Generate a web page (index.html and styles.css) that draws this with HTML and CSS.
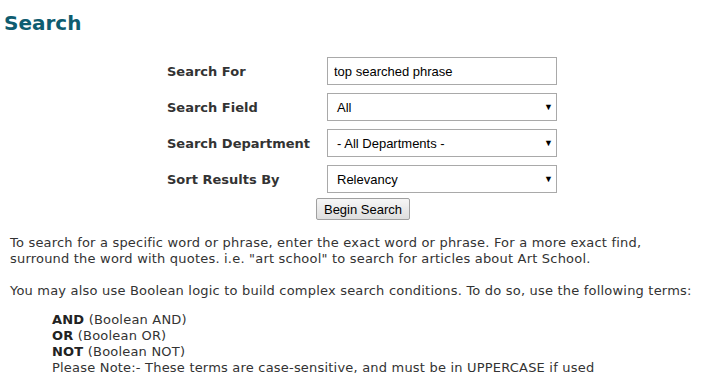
FILE: index.html
```html
<!DOCTYPE html>
<html>
    <head>
        <title>Search</title>
        <link rel="stylesheet" href="styles.css">
    </head>
    <body>
        <h1 class="page-title">Search</h1>
        <form class="search-form" onsubmit="return false;">
            <div class="form-row">
                <label for="q">Search For</label>
                <input type="text" id="q" class="field" value="top searched phrase">
            </div>
            <div class="form-row">
                <label for="field">Search Field</label>
                <div class="select-box">
                    <span>All</span>
                    <span class="arrow">&#9660;</span>
                </div>
            </div>
            <div class="form-row">
                <label for="dept">Search Department</label>
                <div class="select-box">
                    <span>- All Departments -</span>
                    <span class="arrow">&#9660;</span>
                </div>
            </div>
            <div class="form-row">
                <label for="sort">Sort Results By</label>
                <div class="select-box">
                    <span>Relevancy</span>
                    <span class="arrow">&#9660;</span>
                </div>
            </div>
            <div class="button-row">
                <button class="begin-button">Begin Search</button>
            </div>
        </form>

        <div class="help">
            <p>To search for a specific word or phrase, enter the exact word or phrase. For a more exact find, surround the word with quotes. i.e. "art school" to search for articles about Art School.</p>
            <p class="lead">You may also use Boolean logic to build complex search conditions. To do so, use the following terms:</p>
            <div class="terms">
                <b>AND</b> (Boolean AND)<br>
                <b>OR</b> (Boolean OR)<br>
                <b>NOT</b> (Boolean NOT)<br>
                Please Note:- These terms are case-sensitive, and must be in UPPERCASE if used
            </div>
        </div>
    </body>
</html>
```

FILE: styles.css
```css
body {
    margin: 0;
    padding: 0 0 0 10px;
    background: white;
    color: #333;
    font-family: "DejaVu Sans", Verdana, sans-serif;
    font-size: 12px;
}
.page-title {
    margin: 10px 0 0 -6px;
    font-size: 20px;
    font-weight: bold;
    color: #0e5c70;
    line-height: 26px;
}
.search-form {
    width: 390px;
    margin: 21px 0 0 157px;
}
.form-row {
    display: flex;
    align-items: center;
    height: 28px;
    margin-bottom: 8px;
}
.form-row label {
    width: 160px;
    font-weight: bold;
    font-size: 13px;
    color: #333;
}
.field,
.select-box {
    box-sizing: border-box;
    width: 230px;
    height: 28px;
    border: 1px solid #a9a9a9;
    font-family: "Liberation Sans", Arial, sans-serif;
    font-size: 13px;
    color: #000;
}
.field {
    padding: 0 6px;
}
.select-box {
    display: flex;
    align-items: center;
    justify-content: space-between;
    padding: 0 3px 0 9px;
}
.arrow {
    font-size: 9px;
}
.button-row {
    display: flex;
    justify-content: center;
    margin-top: -3px;
    padding-left: 2px;
}
.begin-button {
    height: 22px;
    padding: 0 7px;
    font-family: "Liberation Sans", Arial, sans-serif;
    font-size: 13px;
    color: #000;
    background: linear-gradient(to bottom, #f6f6f6, #dedede);
    border: 1px solid #a0a0a0;
    border-radius: 2px;
}
.help {
    margin-top: 15px;
    font-size: 13px;
    letter-spacing: 0.2px;
    line-height: 16px;
}
.help p {
    margin: 0 0 16px;
}
.help .lead {
    margin-bottom: 13px;
}
.terms {
    margin-left: 42px;
}
.terms b {
    color: #222;
}
```
